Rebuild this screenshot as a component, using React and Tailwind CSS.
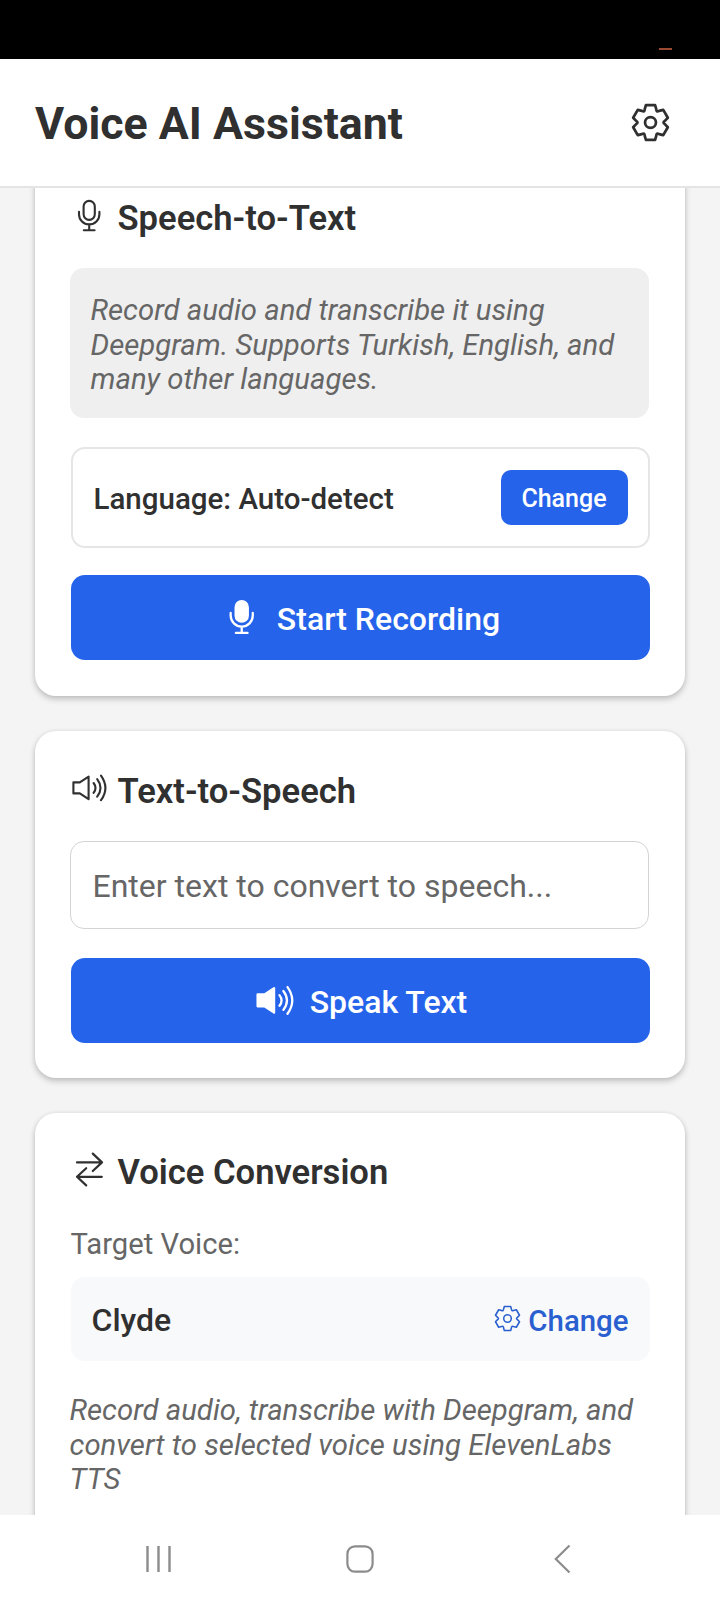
function gearPath() {
  const tooth = [[-5.9, -13.6], [-4.7, -17.8], [4.7, -17.8], [5.9, -13.6]];
  const turn = ([x, y], k) => {
    const a = (k * Math.PI) / 3;
    return `${(x * Math.cos(a) - y * Math.sin(a)).toFixed(2)} ${(x * Math.sin(a) + y * Math.cos(a)).toFixed(2)}`;
  };
  let d = `M${turn(tooth[0], 0)}`;
  for (let k = 0; k < 6; k++) {
    d += `L${turn(tooth[1], k)}L${turn(tooth[2], k)}L${turn(tooth[3], k)}Q${turn([6, -10.4], k)} ${turn(tooth[0], k + 1)}`;
  }
  return d + "Z";
}

function Gear({ className, strokeWidth }) {
  return (
    <svg className={className} viewBox="-20 -20 40 40" fill="none" stroke="currentColor" strokeWidth={strokeWidth} strokeLinejoin="round">
      <path d={gearPath()} />
      <circle r="5.6" />
    </svg>
  );
}

function Mic({ className, solid }) {
  return (
    <svg className={className} viewBox="0 0 36 36" fill="none" stroke="currentColor" strokeWidth="2.1" strokeLinecap="round">
      <rect x="12.6" y="2.9" width="11.2" height="19" rx="5.6" fill={solid ? "currentColor" : "none"} />
      <path d="M8 13.8v2.4a10.2 10.2 0 0 0 20.4 0v-2.4M18.2 26.4v5.4M12.8 32.2h10.8" />
    </svg>
  );
}

function Speaker({ className, solid }) {
  return (
    <svg className={className} viewBox="0 0 36 36" fill="none" stroke="currentColor" strokeWidth="2.1" strokeLinecap="round" strokeLinejoin="round">
      <path d="M2.4 12.4H8.8L17.6 6.6V29.2L8.8 23.4H2.4Z" fill={solid ? "currentColor" : "none"} />
      <path d="M22.6 13Q26.4 17.9 22.6 22.8M26.2 9.2Q32.8 17.9 26.2 26.6M30 5.6Q38.8 17.9 30 30.2" />
    </svg>
  );
}

function Swap({ className }) {
  return (
    <svg className={className} viewBox="0 0 36 36" fill="none" stroke="currentColor" strokeWidth="2.2" strokeLinecap="round" strokeLinejoin="round">
      <path d="M6 10.4H31M21.8 1.6L31 10.4L21.8 19M30.8 24.8H6M15.2 16.2L6 24.8L15.2 33.4" />
    </svg>
  );
}

function CardTitle({ icon, children }) {
  return (
    <div className="flex h-[42px] items-center gap-[11px]">
      {icon}
      <h2 className="text-[34.6px] leading-[42px] font-semibold whitespace-nowrap">{children}</h2>
    </div>
  );
}

function Card({ className, children }) {
  return (
    <section className={`mx-[35px] flex shrink-0 flex-col rounded-[21px] bg-white px-[35.5px] shadow-[0_3px_6px_rgba(0,0,0,0.22),0_0_4px_rgba(0,0,0,0.06)] ${className}`}>
      {children}
    </section>
  );
}

export default function App() {
  return (
    <div className="flex h-[1600px] w-[720px] flex-col overflow-hidden bg-[#f4f4f4] font-['Roboto',sans-serif] text-[#303030]">
      <div className="flex h-[59px] shrink-0 justify-end bg-black pt-12 pr-12">
        <div className="h-[2px] w-[13px] bg-[#9b4a32]" />
      </div>
      <header className="flex h-[129px] shrink-0 items-center justify-between border-b-2 border-[#e4e4e4] bg-white pr-[50px] pl-[35px]">
        <h1 className="pt-[3px] text-[44.7px] leading-[52px] font-bold whitespace-nowrap">Voice AI Assistant</h1>
        <Gear className="h-[39px] w-[39px]" strokeWidth="2.8" />
      </header>

      <main className="flex h-[1327px] shrink-0 flex-col overflow-hidden">
        <Card className="-mt-6 h-[532px] pt-[33px]">
          <CardTitle icon={<Mic className="-mt-1 h-9 w-9" />}>Speech-to-Text</CardTitle>
          <p className="mt-[29px] mr-px -ml-px h-[150px] shrink-0 rounded-[14px] bg-[#efefef] px-[21px] pt-[25px] text-[29.3px] leading-[34.6px] whitespace-nowrap text-[#666] italic">
            Record audio and transcribe it using<br />Deepgram. Supports Turkish, English, and<br />many other languages.
          </p>
          <div className="mt-[29px] flex h-[101px] shrink-0 items-center justify-between rounded-[14px] border-2 border-[#e6e6e6] pr-5 pl-[21px]">
            <span className="pt-[3px] text-[29.5px] font-medium whitespace-nowrap">Language: Auto-detect</span>
            <button className="h-[55px] w-[127px] rounded-[10px] bg-[#2563eb] pt-[3px] text-[25px] font-medium text-white">Change</button>
          </div>
          <button className="mt-[27px] flex h-[85px] shrink-0 items-center justify-center gap-4 rounded-[14px] bg-[#2563eb] pt-[3px] pl-0.5 text-[32px] font-medium text-white">
            <Mic solid className="-mt-1 h-[39px] w-[39px]" />
            <span className="whitespace-nowrap">Start Recording</span>
          </button>
        </Card>

        <Card className="mt-[35px] h-[347px] pt-[39px]">
          <CardTitle icon={<Speaker className="-mt-1.5 h-9 w-9" />}>Text-to-Speech</CardTitle>
          <div className="mt-[29px] mr-px -ml-px flex">
            <input
              className="h-[88px] w-full rounded-[14px] border border-[#d4d4d4] pr-4 pl-[22px] pt-0.5 text-[32px] outline-none placeholder:text-[#666]"
              placeholder="Enter text to convert to speech..."
            />
          </div>
          <button className="mt-[29px] flex h-[85px] shrink-0 items-center justify-center gap-4 rounded-[14px] bg-[#2563eb] pt-[3px] pl-0.5 text-[32px] font-medium text-white">
            <Speaker solid className="-mt-1 h-[39px] w-[39px]" />
            <span className="whitespace-nowrap">Speak Text</span>
          </button>
        </Card>

        <Card className="mt-[35px] h-[500px] pt-[38px]">
          <CardTitle icon={<Swap className="-mt-1 h-9 w-9" />}>Voice Conversion</CardTitle>
          <p className="mt-[33px] text-[29.2px] leading-[36px] text-[#666]">Target Voice:</p>
          <div className="mt-[15px] flex h-[84px] shrink-0 items-center justify-between rounded-[14px] bg-[#f8f9fb] px-[21px]">
            <span className="pt-px text-[32px] font-medium">Clyde</span>
            <span className="flex items-center gap-[7px] pt-[4px] text-[29.4px] font-medium text-[#2a5fd0]">
              <Gear className="-mt-1 h-[27px] w-[27px]" strokeWidth="2.3" />
              Change
            </span>
          </div>
          <p className="mt-[32px] -ml-px text-[29.3px] leading-[34.6px] whitespace-nowrap text-[#666] italic">
            Record audio, transcribe with Deepgram, and<br />convert to selected voice using ElevenLabs<br />TTS
          </p>
        </Card>
      </main>

      <nav className="flex h-[85px] shrink-0 items-center bg-white pt-[2px] pl-[144px] text-[#8c8c8c]">
        <svg className="h-9 w-7" viewBox="0 0 28 36" fill="none" stroke="currentColor" strokeWidth="2.4">
          <path d="M3.5 5v26M14.5 5v26M25.5 5v26" />
        </svg>
        <svg className="ml-[170px] h-9 w-9" viewBox="0 0 36 36" fill="none" stroke="currentColor" strokeWidth="2.2">
          <rect x="5.4" y="5.4" width="25.2" height="25.2" rx="7.5" />
        </svg>
        <svg className="ml-[172px] h-9 w-6" viewBox="0 0 24 36" fill="none" stroke="currentColor" strokeWidth="2.2">
          <path d="M19.5 4.5L5.8 18L19.5 31.5" />
        </svg>
      </nav>
    </div>
  );
}
